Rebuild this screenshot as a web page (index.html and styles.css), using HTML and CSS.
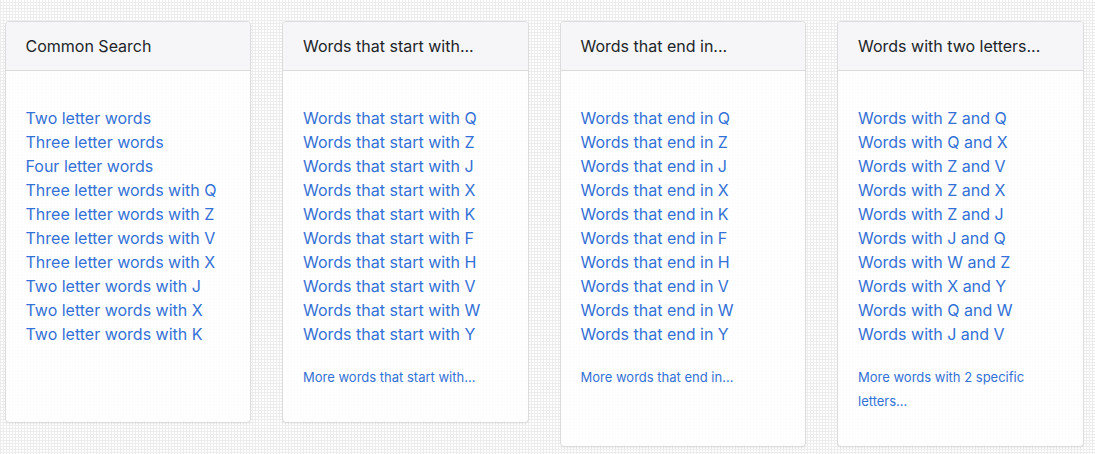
FILE: index.html
```html
<!DOCTYPE html>
<html lang="en">
<head>
<meta charset="utf-8">
<title>Word lists</title>
<link rel="stylesheet" href="styles.css">
</head>
<body>
<div class="board">
  <div class="pair">
    <section class="card">
      <header class="card-head">Common Search</header>
      <div class="card-body">
        <ul class="links">
          <li><a href="#">Two letter words</a></li>
          <li><a href="#">Three letter words</a></li>
          <li><a href="#">Four letter words</a></li>
          <li><a href="#">Three letter words with Q</a></li>
          <li><a href="#">Three letter words with Z</a></li>
          <li><a href="#">Three letter words with V</a></li>
          <li><a href="#">Three letter words with X</a></li>
          <li><a href="#">Two letter words with J</a></li>
          <li><a href="#">Two letter words with X</a></li>
          <li><a href="#">Two letter words with K</a></li>
        </ul>
      </div>
    </section>
    <section class="card">
      <header class="card-head">Words that start with...</header>
      <div class="card-body">
        <ul class="links">
          <li><a href="#">Words that start with Q</a></li>
          <li><a href="#">Words that start with Z</a></li>
          <li><a href="#">Words that start with J</a></li>
          <li><a href="#">Words that start with X</a></li>
          <li><a href="#">Words that start with K</a></li>
          <li><a href="#">Words that start with F</a></li>
          <li><a href="#">Words that start with H</a></li>
          <li><a href="#">Words that start with V</a></li>
          <li><a href="#">Words that start with W</a></li>
          <li><a href="#">Words that start with Y</a></li>
        </ul>
        <p class="more"><a href="#">More words that start with...</a></p>
      </div>
    </section>
  </div>
  <div class="pair">
    <section class="card">
      <header class="card-head">Words that end in...</header>
      <div class="card-body">
        <ul class="links">
          <li><a href="#">Words that end in Q</a></li>
          <li><a href="#">Words that end in Z</a></li>
          <li><a href="#">Words that end in J</a></li>
          <li><a href="#">Words that end in X</a></li>
          <li><a href="#">Words that end in K</a></li>
          <li><a href="#">Words that end in F</a></li>
          <li><a href="#">Words that end in H</a></li>
          <li><a href="#">Words that end in V</a></li>
          <li><a href="#">Words that end in W</a></li>
          <li><a href="#">Words that end in Y</a></li>
        </ul>
        <p class="more"><a href="#">More words that end in...</a></p>
      </div>
    </section>
    <section class="card">
      <header class="card-head">Words with two letters...</header>
      <div class="card-body">
        <ul class="links">
          <li><a href="#">Words with Z and Q</a></li>
          <li><a href="#">Words with Q and X</a></li>
          <li><a href="#">Words with Z and V</a></li>
          <li><a href="#">Words with Z and X</a></li>
          <li><a href="#">Words with Z and J</a></li>
          <li><a href="#">Words with J and Q</a></li>
          <li><a href="#">Words with W and Z</a></li>
          <li><a href="#">Words with X and Y</a></li>
          <li><a href="#">Words with Q and W</a></li>
          <li><a href="#">Words with J and V</a></li>
        </ul>
        <p class="more narrow"><a href="#">More words with 2 specific letters...</a></p>
      </div>
    </section>
  </div>
</div>
</body>
</html>
```
FILE: styles.css
```css
html, body {
  margin: 0;
  padding: 0;
}
body {
  width: 1095px;
  height: 454px;
  overflow: hidden;
  font-family: Inter, "Liberation Sans", Arial, sans-serif;
  color: #212529;
  background-color: #ffffff;
  background-image:
    linear-gradient(90deg, #ededed 1px, transparent 1px),
    linear-gradient(0deg, #ededed 1px, transparent 1px);
  background-size: 3px 3px;
}
.board {
  display: flex;
  align-items: flex-start;
  gap: 31px;
  padding: 21px 0 0 4.5px;
}
.pair {
  display: flex;
  align-items: stretch;
  gap: 31px;
}
.card {
  width: 246.5px;
  box-sizing: border-box;
  border: 1px solid #dcdcdc;
  border-radius: 4px;
  background: rgba(255, 255, 255, 0.85);
  box-shadow: 0 1px 2px rgba(0, 0, 0, 0.06);
  overflow: hidden;
}
.card-head {
  padding: 12px 20px;
  font-size: 16px;
  line-height: 24px;
  background: #f6f6f8;
  border-bottom: 1px solid #dcdcdc;
}
.card-body {
  padding: 35px 20px 33px 20px;
}
.links {
  list-style: none;
  margin: 0;
  padding: 0;
  font-size: 16px;
  line-height: 24px;
}
a {
  color: #3371d6;
  text-decoration: none;
}
.more {
  margin: 19px 0 0;
  font-size: 13px;
  line-height: 24px;
}
.narrow {
  width: 180px;
}
```
